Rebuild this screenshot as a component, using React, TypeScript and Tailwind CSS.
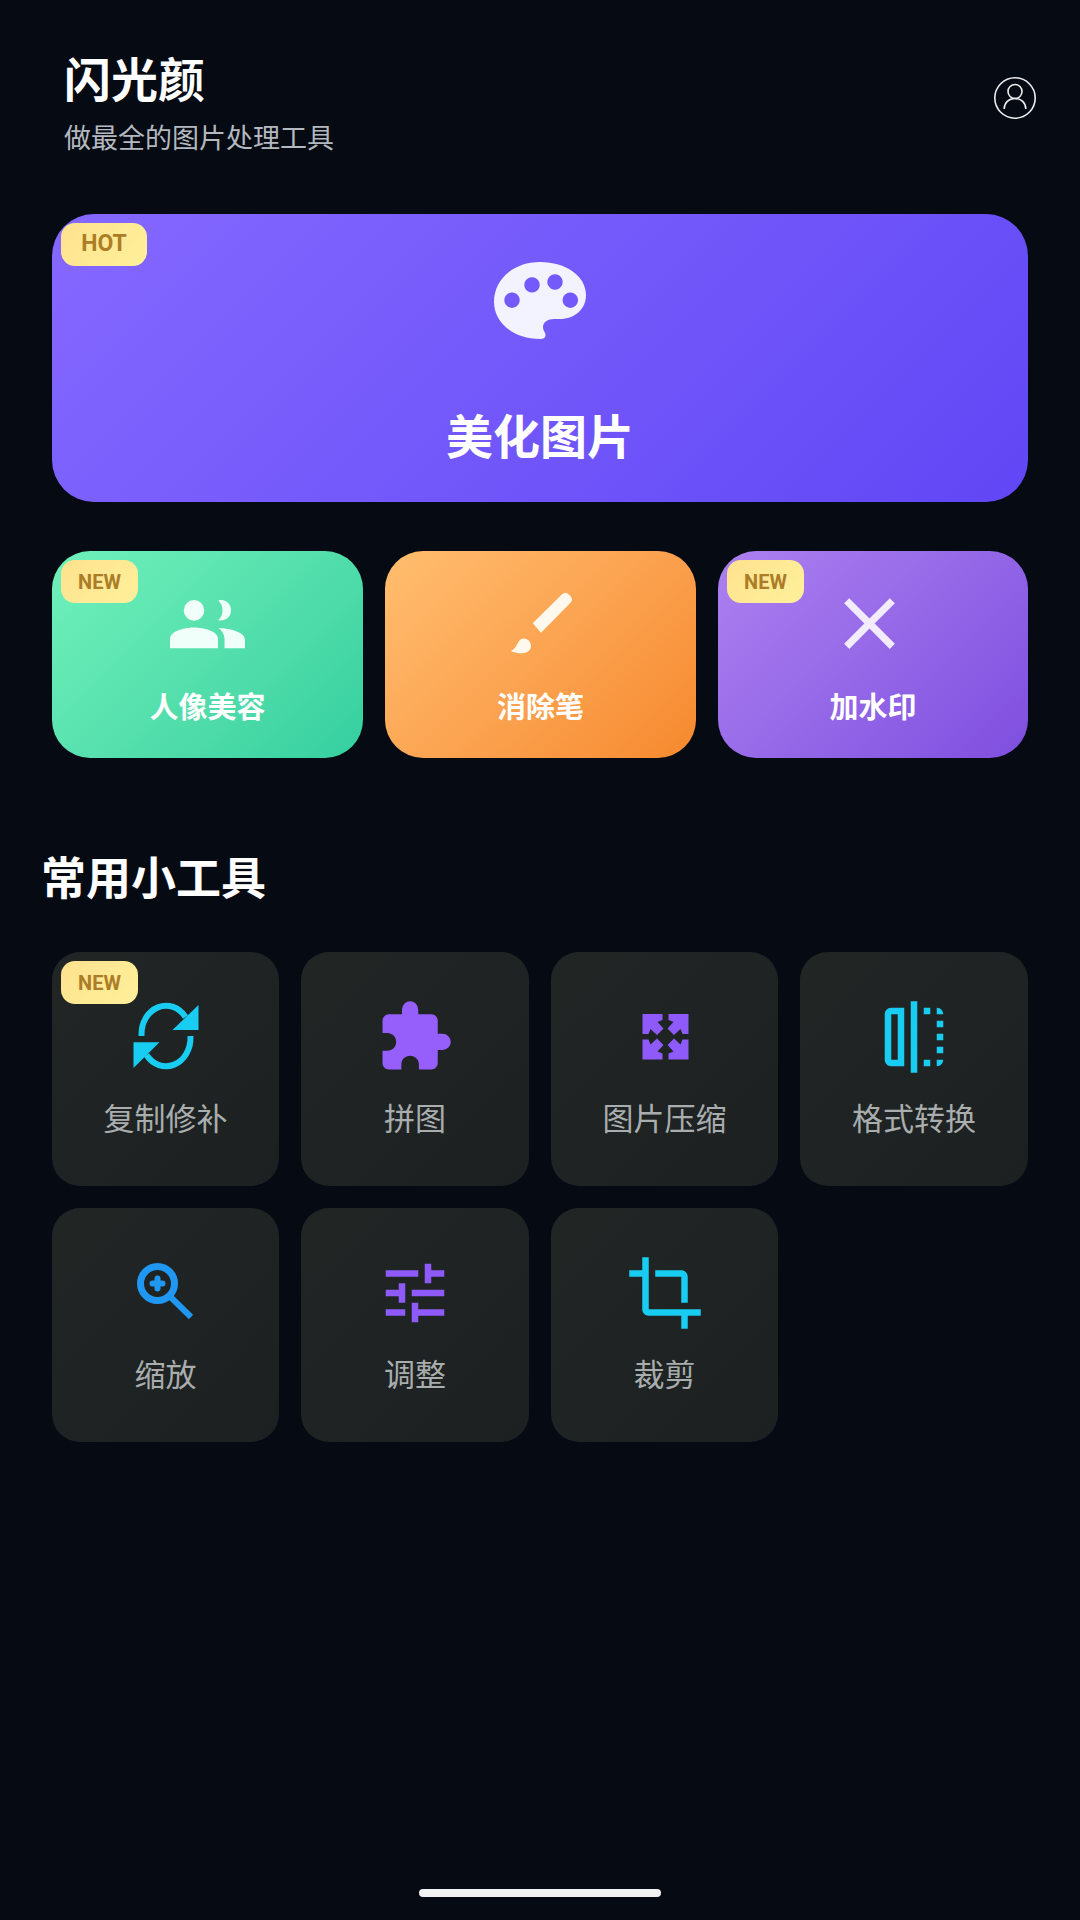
import React from 'react';
import { MdClose, MdCrop, MdExtension, MdTune } from 'react-icons/md';

type IconProps = { className?: string };

const Badge = ({ text, wide }: { text: string; wide?: boolean }) => (
  <span
    className={`absolute left-[9px] top-[9px] flex h-[43px] items-center justify-center rounded-[14px] bg-linear-135 from-[#ffe28e] to-[#fff09b] font-bold text-[#ac7d27] ${wide ? 'w-[86px] text-[23px]' : 'w-[77px] text-[20px]'}`}
  >
    {text}
  </span>
);

const ProfileIcon = () => (
  <svg viewBox="0 0 44 44" className="h-[44px] w-[44px] text-[#eceef0]" fill="none" stroke="currentColor" strokeWidth="1.6">
    <circle cx="22" cy="22" r="20.2" />
    <circle cx="22" cy="15.5" r="7" />
    <path d="M11.2 33c0-6.5 4.6-10.5 10.8-10.5S32.8 26.500 32.800 33" />
  </svg>
);

const PaletteIcon = () => (
  <svg viewBox="0 0 92 77" className="h-[77px] w-[92px] text-[#f3f2ff]" fill="currentColor">
    <path
      fillRule="evenodd"
      d="M46 0C72 0 92 14 92 33C92 47 81 57 66 57H60C54 57 49 60 49 65C49 69 51.500 70 51.500 73C51.500 76 49 77 46 77C20 77 0 61 0 40C0 17 20 0 46 0ZM18 30.500a7.700 7.700 0 1 0 .01 0ZM38 15.200a7.700 7.700 0 1 0 .01 0ZM61 12.300a7.700 7.700 0 1 0 .01 0ZM76.300 30.500a7.700 7.700 0 1 0 .01 0Z"
    />
  </svg>
);

const PeopleIcon = () => (
  <svg viewBox="0 0 76 48" className="mt-[2px] ml-[1px] h-[49px] w-[76px] text-[#f0fff9]" preserveAspectRatio="none" fill="currentColor">
    <circle cx="24" cy="10.200" r="10.200" />
    <path d="M0 47.300V38C0 31 13 27 24 27S48 31 48 38V47.300Z" />
    <path d="M48.300 .2C56 -1 61 4 61 10C61 16 56 21 48.300 19.800C51 17 52.500 14 52.500 10C52.500 6 51 3 48.300 .2Z" />
    <path d="M48.500 27.500C62 28 75 32 75 39V47.300H54.500V38C54.500 34 52 30 48.500 27.500Z" />
  </svg>
);

const BrushIcon = () => (
  <svg viewBox="0 0 90 80" className="-mt-[6px] h-[80px] w-[90px] text-[#fff8ec]" fill="currentColor">
    <path d="M36.700 43.300L66 14.300C68 12.300 70.500 12.300 72.500 14.300L74.500 16.300C76.500 18.300 76.500 20.800 74.500 22.800L45 52.700Z" />
    <path d="M15.500 70.500C20 69 21 62.500 24.500 59.500C28.500 56.500 35 60 35 66C35 72.500 27 75.500 15.500 71.500Z" />
  </svg>
);

const SyncIcon = ({ className }: IconProps) => (
  <svg viewBox="0 0 78 78" className={className} fill="currentColor">
    <g transform="translate(6.500 6)">
      <path d="M8 32V31A24.500 28.500 0 0 1 52 13" fill="none" stroke="currentColor" strokeWidth="6" />
      <path d="M57 32V33A24.500 28.500 0 0 1 13 51" fill="none" stroke="currentColor" strokeWidth="6" />
      <path d="M65 1V26H39Z" />
      <path d="M0 64V38.300H26Z" />
    </g>
  </svg>
);

const CompressIcon = ({ className }: IconProps) => {
  const arrow = 'M0 0H20V6L15 8L21 14.500L14.500 21L8 15L6 20H0Z';
  return (
    <svg viewBox="0 0 78 78" className={className} fill="currentColor">
      <g transform="translate(16.500 16)">
        <path d={arrow} />
        <path d={arrow} transform="matrix(-1 0 0 1 46 0)" />
        <path d={arrow} transform="matrix(1 0 0 -1 0 45.500)" />
        <path d={arrow} transform="matrix(-1 0 0 -1 46 45.500)" />
      </g>
    </svg>
  );
};

const FlipIcon = ({ className }: IconProps) => (
  <svg viewBox="0 0 24 24" className={className} fill="currentColor">
    <path
      fillRule="evenodd"
      d="M15 21h2v-2h-2v2zm4-12h2V7h-2v2zM3 5v14c0 1.100.9 2 2 2h4V3H5c-1.100 0-2 .9-2 2zm2 0h2v14H5V5zm14-2v2h2c0-1.100-.9-2-2-2zm-8 20h2V1h-2v22zm8-6h2v-2h-2v2zM15 5h2V3h-2v2zm4 8h2v-2h-2v2zm0 8c1.100 0 2-.9 2-2h-2v2z"
    />
  </svg>
);

const ZoomIcon = ({ className }: IconProps) => (
  <svg viewBox="0 0 78 78" className={className} fill="none" stroke="currentColor" strokeWidth="7">
    <circle cx="30.500" cy="29.500" r="17" />
    <path d="M43 42.500L64 63" strokeWidth="6" />
    <path d="M30.500 24.500V34.500M25.500 29.500H35.500" strokeWidth="6" strokeLinecap="round" />
  </svg>
);

const tools = [
  { name: '复制修补', Icon: SyncIcon, color: 'text-[#19cdf2]', isNew: true },
  { name: '拼图', Icon: MdExtension, color: 'text-[#965ffb]' },
  { name: '图片压缩', Icon: CompressIcon, color: 'text-[#8e5bfa]' },
  { name: '格式转换', Icon: FlipIcon, color: 'text-[#19cdf2]' },
  { name: '缩放', Icon: ZoomIcon, color: 'text-[#1f97f3]' },
  { name: '调整', Icon: MdTune, color: 'text-[#8e5bfa]' },
  { name: '裁剪', Icon: MdCrop, color: 'text-[#19cdf2]' },
];

const FeatureCard = ({ label, gradient, isNew, children }: { label: string; gradient: string; isNew?: boolean; children: React.ReactNode }) => (
  <div className={`relative flex h-[207px] flex-col items-center rounded-[38px] bg-linear-135 pt-[26px] ${gradient}`}>
    {isNew && <Badge text="NEW" />}
    <div className="flex h-[92px] w-[92px] items-center justify-center">{children}</div>
    <p className="mt-[19px] text-[29px] leading-[40px] font-bold text-white">{label}</p>
  </div>
);

export default function App() {
  return (
    <div className="flex h-[1920px] w-[1080px] flex-col overflow-hidden bg-[#060a13] px-[52px] font-[Roboto,'Noto_Sans_CJK_SC',sans-serif]">
      <header className="flex items-start justify-between pt-[53px] pl-[12px]">
        <div>
          <h1 className="text-[47px] leading-[56px] font-bold text-white">闪光颜</h1>
          <p className="mt-[12px] text-[27px] leading-[36px] text-[#b4b9c0]">做最全的图片处理工具</p>
        </div>
        <div className="mt-[23px] -mr-[9px]">
          <ProfileIcon />
        </div>
      </header>

      <section className="relative mt-[57px] flex h-[288px] flex-col items-center rounded-[42px] bg-linear-135 from-[#8568ff] to-[#6146f5] pt-[40px]">
        <Badge text="HOT" wide />
        <div className="flex h-[92px] items-center justify-center">
          <PaletteIcon />
        </div>
        <p className="mt-[62px] text-[47px] leading-[60px] font-bold text-white">美化图片</p>
      </section>

      <section className="mt-[49px] grid grid-cols-[311px_311px_310px] gap-[22px]">
        <FeatureCard label="人像美容" gradient="from-[#70f1bb] to-[#34cf9f]" isNew>
          <PeopleIcon />
        </FeatureCard>
        <FeatureCard label="消除笔" gradient="from-[#ffbe6f] to-[#f6892d]">
          <BrushIcon />
        </FeatureCard>
        <FeatureCard label="加水印" gradient="from-[#ad80f0] to-[#7f4edf]" isNew>
          <MdClose className="-ml-[8px] h-[87px] w-[87px] shrink-0 text-[#f3ecff]" />
        </FeatureCard>
      </section>

      <h2 className="mt-[92px] -ml-[11px] text-[45px] leading-[60px] font-bold text-white">常用小工具</h2>

      <section className="mt-[42px] grid grid-cols-[227px_228px_227px_228px] gap-[22px]">
        {tools.map(({ name, Icon, color, isNew }) => (
          <div key={name} className="relative flex h-[234px] flex-col items-center rounded-[28px] bg-linear-135 from-[#212625] to-[#1c2021] pt-[46px]">
            {isNew && <Badge text="NEW" />}
            <Icon className={`h-[78px] w-[78px] ${color}`} />
            <p className="mt-[22px] text-[31px] leading-[44px] text-[#a9adad]">{name}</p>
          </div>
        ))}
      </section>

      <div className="mx-auto mt-auto mb-[23px] h-[8px] w-[242px] rounded-full bg-[#f2f2f2]" />
    </div>
  );
}
